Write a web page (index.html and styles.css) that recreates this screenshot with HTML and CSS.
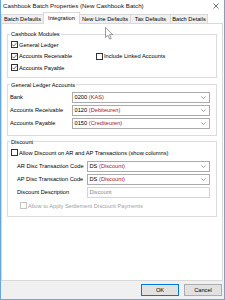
FILE: index.html
```html
<!DOCTYPE html>
<html>
<head>
<meta charset="utf-8">
<link rel="stylesheet" href="styles.css">
</head>
<body>
<div class="window">
  <div class="titlebar">
    <span class="title">Cashbook Batch Properties (New Cashbook Batch)</span>
    <svg class="close" viewBox="0 0 6 6" width="6" height="6"><path d="M0.5 0.5L5.5 5.5M5.5 0.5L0.5 5.5" stroke="#333" stroke-width="0.7" fill="none"/></svg>
  </div>
  <div class="tabs">
    <div class="tab t-bd">Batch Defaults</div>
    <div class="tab active t-int">Integration</div>
    <div class="tab t-nld">New Line Defaults</div>
    <div class="tab t-tax">Tax Defaults</div>
    <div class="tab t-det">Batch Details</div>
  </div>
  <div class="page">
    <fieldset class="group g1">
      <legend>Cashbook Modules</legend>
      <div class="g1-body">
        <div class="row">
          <span class="check"><span class="box"><svg viewBox="0 0 7 7" width="7" height="7"><path d="M1.3 3.6L2.8 5.1L5.8 1.6" stroke="#333" stroke-width="0.7" fill="none"/></svg></span>General Ledger</span>
        </div>
        <div class="row two">
          <span class="check"><span class="box"><svg viewBox="0 0 7 7" width="7" height="7"><path d="M1.3 3.6L2.8 5.1L5.8 1.6" stroke="#333" stroke-width="0.7" fill="none"/></svg></span>Accounts Receivable</span>
          <span class="check"><span class="box"></span>Include Linked Accounts</span>
        </div>
        <div class="row">
          <span class="check"><span class="box"><svg viewBox="0 0 7 7" width="7" height="7"><path d="M1.3 3.6L2.8 5.1L5.8 1.6" stroke="#333" stroke-width="0.7" fill="none"/></svg></span>Accounts Payable</span>
        </div>
      </div>
    </fieldset>

    <fieldset class="group g2">
      <legend>General Ledger Accounts</legend>
      <div class="g2-body">
        <span class="lbl">Bank</span>
        <div class="combo"><span>0200 <em>(KAS)</em></span><svg class="chev" viewBox="0 0 5 3" width="5" height="3"><path d="M0.4 0.4L2.5 2.5L4.6 0.4" stroke="#666" stroke-width="0.6" fill="none"/></svg></div>
        <span class="lbl">Accounts Receivable</span>
        <div class="combo"><span>0120 <em>(Debiteuren)</em></span><svg class="chev" viewBox="0 0 5 3" width="5" height="3"><path d="M0.4 0.4L2.5 2.5L4.6 0.4" stroke="#666" stroke-width="0.6" fill="none"/></svg></div>
        <span class="lbl">Accounts Payable</span>
        <div class="combo"><span>0150 <em>(Crediteuren)</em></span><svg class="chev" viewBox="0 0 5 3" width="5" height="3"><path d="M0.4 0.4L2.5 2.5L4.6 0.4" stroke="#666" stroke-width="0.6" fill="none"/></svg></div>
      </div>
    </fieldset>

    <fieldset class="group g3">
      <legend>Discount</legend>
      <div class="g3-body">
        <div class="row10">
          <span class="check"><span class="box"></span>Allow Discount on AR and AP Transactions (show columns)</span>
        </div>
        <div class="disc-grid">
          <span class="lbl">AR Disc Transaction Code</span>
          <div class="combo"><span>DS <em>(Discount)</em></span><svg class="chev" viewBox="0 0 5 3" width="5" height="3"><path d="M0.4 0.4L2.5 2.5L4.6 0.4" stroke="#666" stroke-width="0.6" fill="none"/></svg></div>
          <span class="lbl">AP Disc Transaction Code</span>
          <div class="combo"><span>DS <em>(Discount)</em></span><svg class="chev" viewBox="0 0 5 3" width="5" height="3"><path d="M0.4 0.4L2.5 2.5L4.6 0.4" stroke="#666" stroke-width="0.6" fill="none"/></svg></div>
          <span class="lbl">Discount Description</span>
          <div class="textbox">Discount</div>
        </div>
        <div class="row10 settle">
          <span class="check disabled"><span class="box"></span>Allow to Apply Settlement Discount Payments</span>
        </div>
      </div>
    </fieldset>
  </div>
  <div class="footer">
    <div class="btn default">OK</div>
    <div class="btn">Cancel</div>
  </div>
  <svg class="cursor" viewBox="0 0 9 13" width="9" height="13"><path d="M0.5 0.5L0.5 10.5L2.9 8.3L4.6 12.1L6.2 11.4L4.5 7.7L7.8 7.7Z" fill="#fff" stroke="#555" stroke-width="0.6" stroke-linejoin="round"/></svg>
</div>
</body>
</html>
```

FILE: styles.css
```css
* { box-sizing: border-box; }
html, body { margin: 0; padding: 0; }
body {
  width: 225px;
  height: 300px;
  overflow: hidden;
  background: #fff;
  font-family: "Liberation Sans", Arial, sans-serif;
  font-size: 5.7px;
  color: #000;
}
.window {
  position: relative;
  height: 300px;
  display: flex;
  flex-direction: column;
  border: 1px solid #64a8df;
  border-top: 0;
  background: #fff;
}
.titlebar {
  height: 12px;
  flex: none;
  display: flex;
  align-items: center;
  justify-content: space-between;
  padding: 0 5px 0 2px;
}
.title { font-size: 6.2px; line-height: 8px; color: #111; }
.close { display: block; }

.tabs {
  height: 11px;
  flex: none;
  display: flex;
  align-items: flex-end;
  position: relative;
  z-index: 1;
}
.tab {
  height: 9px;
  line-height: 8px;
  padding: 0;
  text-align: center;
  background: #f0f0f0;
  border: 1px solid #d9d9d9;
  border-bottom: 0;
  margin-left: -1px;
  white-space: nowrap;
  flex: none;
}
.tab:first-child { margin-left: 0; }
.tab.active {
  height: 12px;
  line-height: 10px;
  margin-bottom: -1px;
  background: #fff;
}
.t-bd { width: 43px; }
.t-int { width: 37px; }
.t-nld { width: 52px; }
.t-tax { width: 41px; }
.t-det { width: 38px; }

.page {
  flex: 1;
  border: 1px solid #d9d9d9;
  margin-right: 1px;
  padding: 0 5px;
  display: flex;
  flex-direction: column;
}

.group {
  margin: 0;
  padding: 0;
  border: 1px solid #dcdcdc;
  min-width: 0;
}
.group legend {
  margin-left: 2px;
  padding: 0 1px;
  line-height: 8px;
  height: 8px;
}
.g1 { margin-top: 6px; }
.g2 { margin-top: 3px; }
.g3 { margin-top: 2px; }

.g1-body { padding: 1px 0 3px 3px; }
.row { height: 11.5px; display: flex; align-items: center; }
.row.two { display: grid; grid-template-columns: 85px auto; align-items: center; }

.check { display: flex; align-items: center; white-space: nowrap; }
.box {
  width: 7px;
  height: 7px;
  border: 1px solid #333;
  background: #fff;
  margin-right: 1px;
  display: flex;
  align-items: center;
  justify-content: center;
  flex: none;
}
.box svg { display: block; flex: none; }
.check.disabled { color: #a0a0a0; }
.check.disabled .box { border-color: #c4c4c4; }

.g2-body {
  padding: 3px 6px 6px 2px;
  display: grid;
  grid-template-columns: 62px 1fr;
  row-gap: 2px;
  align-items: center;
}
.lbl { white-space: nowrap; }
.combo, .textbox {
  height: 11px;
  border: 1px solid #ababab;
  background: #fff;
  display: flex;
  align-items: center;
  justify-content: space-between;
  padding: 0 3px 0 1.5px;
  white-space: nowrap;
}
.combo em { font-style: normal; color: #a3142e; }
.chev { display: block; }
.textbox { border-color: #d4d4d4; color: #8a8a8a; }

.g3-body { padding: 2px 6px 5px 3px; }
.row10 { height: 10px; display: flex; align-items: center; }
.disc-grid {
  margin: 3px 0 0 6px;
  display: grid;
  grid-template-columns: 70px 1fr;
  row-gap: 2px;
  align-items: center;
}
.settle { margin: 3px 0 0 9px; }

.footer {
  height: 18px;
  flex: none;
  background: #f0f0f0;
  display: flex;
  justify-content: flex-end;
  align-items: flex-start;
  gap: 5px;
  padding: 3px 2px 0 0;
}
.btn {
  width: 38px;
  height: 12px;
  border: 1px solid #adadad;
  background: #e1e1e1;
  display: flex;
  align-items: center;
  justify-content: center;
}
.btn.default { border-color: #0078d7; }

.cursor {
  position: absolute;
  left: 104px;
  top: 27px;
  display: block;
}
```
